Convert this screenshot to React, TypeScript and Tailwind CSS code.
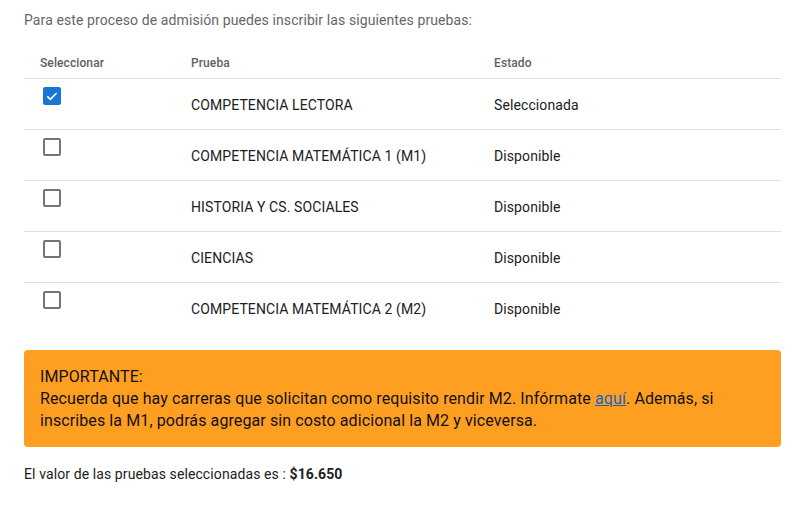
const PRUEBAS = [
  { nombre: 'COMPETENCIA LECTORA', estado: 'Seleccionada', checked: true },
  { nombre: 'COMPETENCIA MATEMÁTICA 1 (M1)', estado: 'Disponible', checked: false },
  { nombre: 'HISTORIA Y CS. SOCIALES', estado: 'Disponible', checked: false },
  { nombre: 'CIENCIAS', estado: 'Disponible', checked: false },
  { nombre: 'COMPETENCIA MATEMÁTICA 2 (M2)', estado: 'Disponible', checked: false },
];

function Checkbox({ checked }: { checked: boolean }) {
  if (checked) {
    return (
      <span className="flex h-[18px] w-[18px] items-center justify-center rounded-[2px] bg-[#1976d2]">
        <svg viewBox="0 0 24 24" className="h-[16px] w-[16px]" fill="none" stroke="#fff" strokeWidth="2.6">
          <path d="M5 12.5l4.5 4.5L19 7.5" />
        </svg>
      </span>
    );
  }
  return <span className="block h-[18px] w-[18px] rounded-[2px] border-2 border-[#757575]" />;
}

export default function App() {
  return (
    <div className="min-h-[520px] bg-white pl-6 pr-[19px] pt-[10px] font-['Roboto',sans-serif] tracking-[0.1px]">
      <p className="text-[14px] leading-5 text-[#666]">
        Para este proceso de admisión puedes inscribir las siguientes pruebas:
      </p>

      <table className="mt-[24px] w-full border-collapse text-left">
        <thead>
          <tr className="border-b border-[#e0e0e0]">
            <th className="w-[167px] pb-[6px] pl-4 text-[12px] font-medium text-[#616161]">Seleccionar</th>
            <th className="w-[303px] pb-[6px] text-[12px] font-medium text-[#616161]">Prueba</th>
            <th className="pb-[6px] text-[12px] font-medium text-[#616161]">Estado</th>
          </tr>
        </thead>
        <tbody>
          {PRUEBAS.map((p, i) => (
            <tr key={p.nombre} className={i < PRUEBAS.length - 1 ? 'h-[51px] border-b border-[#e0e0e0]' : 'h-[51px]'}>
              <td className="pl-[19px] pt-[8px] align-top">
                <Checkbox checked={p.checked} />
              </td>
              <td className="pt-[2px] text-[14px] text-[#212121]">{p.nombre}</td>
              <td className="pt-[2px] text-[14px] text-[#212121]">{p.estado}</td>
            </tr>
          ))}
        </tbody>
      </table>

      <div className="mt-[16px] rounded-[4px] bg-[#ff9f22] px-4 pb-[15px] pt-[16px] text-[16px] leading-[22px] text-[#111]">
        <div>IMPORTANTE:</div>
        <div>
          Recuerda que hay carreras que solicitan como requisito rendir M2. Infórmate{' '}
          <a href="#" className="text-[#1565c0] underline">aquí</a>. Además, si inscribes la M1, podrás agregar sin costo
          adicional la M2 y viceversa.
        </div>
      </div>

      <p className="mt-[17px] text-[14px] text-[#212121]">
        El valor de las pruebas seleccionadas es : <span className="font-bold">$16.650</span>
      </p>
    </div>
  );
}
